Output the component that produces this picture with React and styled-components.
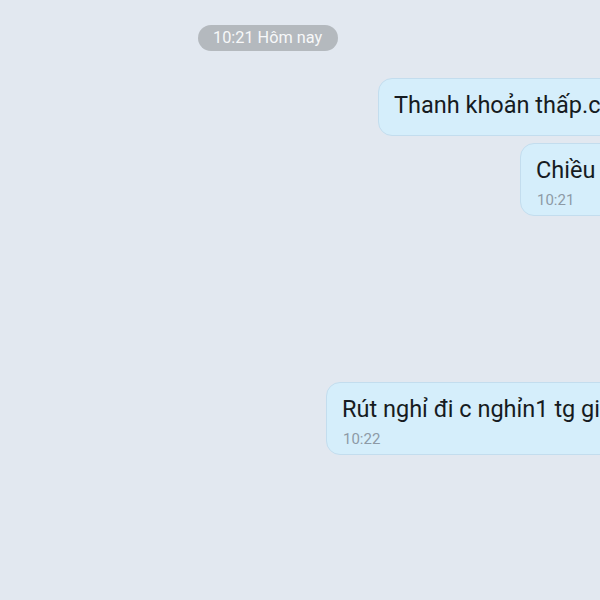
import React from 'react';
import styled, { createGlobalStyle } from 'styled-components';

const GlobalStyle = createGlobalStyle`
  html, body {
    margin: 0;
    padding: 0;
    width: 600px;
    height: 600px;
    overflow: hidden;
    background: #e2e8f0;
  }
  body {
    font-family: Roboto, "Noto Sans", "Liberation Sans", sans-serif;
  }
`;

const Thread = styled.div`
  width: 600px;
  height: 600px;
  overflow: hidden;
  background: #e2e8f0;
  display: flex;
  flex-direction: column;
  align-items: flex-start;
  padding-top: 25px;
  box-sizing: border-box;
`;

const DatePill = styled.div`
  margin-left: 198px;
  height: 26px;
  padding: 0 16px 0 15px;
  border-radius: 13px;
  background: #b4b9be;
  color: #f7f8f9;
  font-size: 16.3px;
  line-height: 26px;
  white-space: nowrap;
  margin-bottom: 27px;
`;

const Bubble = styled.div`
  margin-left: ${p => p.$indent}px;
  margin-top: ${p => p.$gap || 0}px;
  padding: 12px 15px ${p => (p.$time ? 6 : 16)}px 15px;
  min-width: 700px;
  box-sizing: border-box;
  background: #d5eefb;
  border: 1px solid #c3ddee;
  border-radius: 14px;
  white-space: nowrap;
`;

const Text = styled.div`
  font-size: 23.5px;
  line-height: 28px;
  color: #161b21;
`;

const Time = styled.div`
  margin-top: 7px;
  padding-left: 1px;
  font-size: 15px;
  line-height: 18px;
  color: #8d9aa6;
`;

const messages = [
  { id: 1, text: 'Thanh khoản thấp.chứ không phải', indent: 378, gap: 0 },
  { id: 2, text: 'Chiều nay', time: '10:21', indent: 520, gap: 7 },
  { id: 3, text: 'Rút nghỉ đi c nghỉn1 tg giờ', time: '10:22', indent: 326, gap: 166 },
];

export default function App() {
  return (
    <>
      <GlobalStyle />
      <Thread>
        <DatePill>10:21 Hôm nay</DatePill>
        {messages.map(m => (
          <Bubble key={m.id} $indent={m.indent} $gap={m.gap} $time={!!m.time}>
            <Text>{m.text}</Text>
            {m.time && <Time>{m.time}</Time>}
          </Bubble>
        ))}
      </Thread>
    </>
  );
}
